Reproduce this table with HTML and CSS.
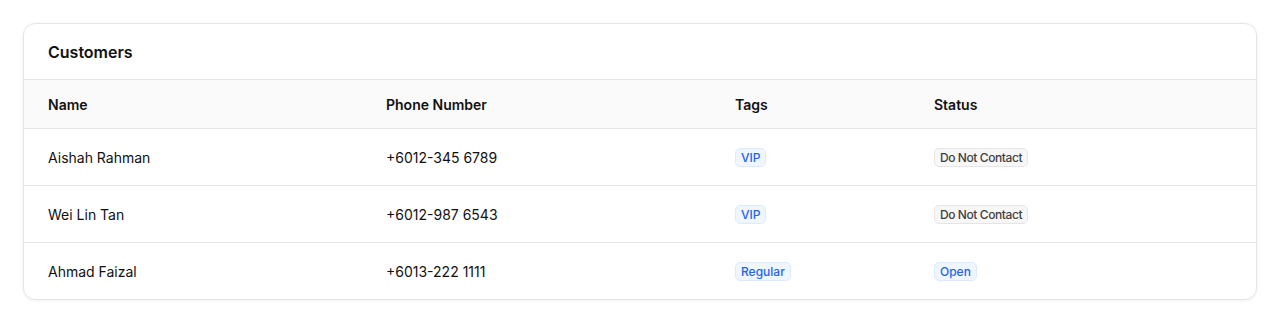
FILE: index.html
```html
<!DOCTYPE html>
<html>
<head>
<meta charset="utf-8">
<link rel="stylesheet" href="styles.css">
</head>
<body>
<div class="card">
  <div class="card-header">Customers</div>
  <div class="table">
    <div class="row head">
      <div class="cell">Name</div>
      <div class="cell">Phone Number</div>
      <div class="cell">Tags</div>
      <div class="cell">Status</div>
    </div>
    <div class="row">
      <div class="cell">Aishah Rahman</div>
      <div class="cell">+6012-345 6789</div>
      <div class="cell"><span class="badge blue">VIP</span></div>
      <div class="cell"><span class="badge gray">Do Not Contact</span></div>
    </div>
    <div class="row">
      <div class="cell">Wei Lin Tan</div>
      <div class="cell">+6012-987 6543</div>
      <div class="cell"><span class="badge blue">VIP</span></div>
      <div class="cell"><span class="badge gray">Do Not Contact</span></div>
    </div>
    <div class="row last">
      <div class="cell">Ahmad Faizal</div>
      <div class="cell">+6013-222 1111</div>
      <div class="cell"><span class="badge blue">Regular</span></div>
      <div class="cell"><span class="badge blue">Open</span></div>
    </div>
  </div>
</div>
</body>
</html>
```
FILE: styles.css
```css
* { box-sizing: border-box; }
body {
  margin: 0;
  padding: 23px;
  background: #ffffff;
  font-family: Inter, "Noto Sans", sans-serif;
  color: #111111;
}
.card {
  border: 1px solid #e5e5e5;
  border-radius: 12px;
  background: #fff;
  box-shadow: 0 1px 3px rgba(0,0,0,0.06);
  overflow: hidden;
}
.card-header {
  height: 56px;
  display: flex;
  align-items: center;
  padding: 0 24px;
  font-size: 16px;
  font-weight: 600;
  border-bottom: 1px solid #e5e5e5;
}
.row {
  display: grid;
  grid-template-columns: 338px 349px 199px 1fr;
  border-bottom: 1px solid #e5e5e5;
}
.row.last { border-bottom: none; }
.row.head {
  background: #fafafa;
}
.cell {
  padding: 0 24px;
  height: 56px;
  display: flex;
  align-items: center;
  font-size: 14px;
}
.head .cell {
  height: 48px;
  font-weight: 600;
}
.badge {
  display: inline-flex;
  align-items: center;
  height: 19px;
  padding: 0 5px;
  font-size: 12px;
  font-weight: 500;
  border-radius: 5px;
  border: 1px solid;
}
.badge.blue {
  color: #2563eb;
  background: #eff6ff;
  border-color: #dbeafe;
}
.badge.gray {
  color: #404040;
  background: #f7f7f7;
  border-color: #e5e5e5;
  letter-spacing: -0.035em;
}
```
